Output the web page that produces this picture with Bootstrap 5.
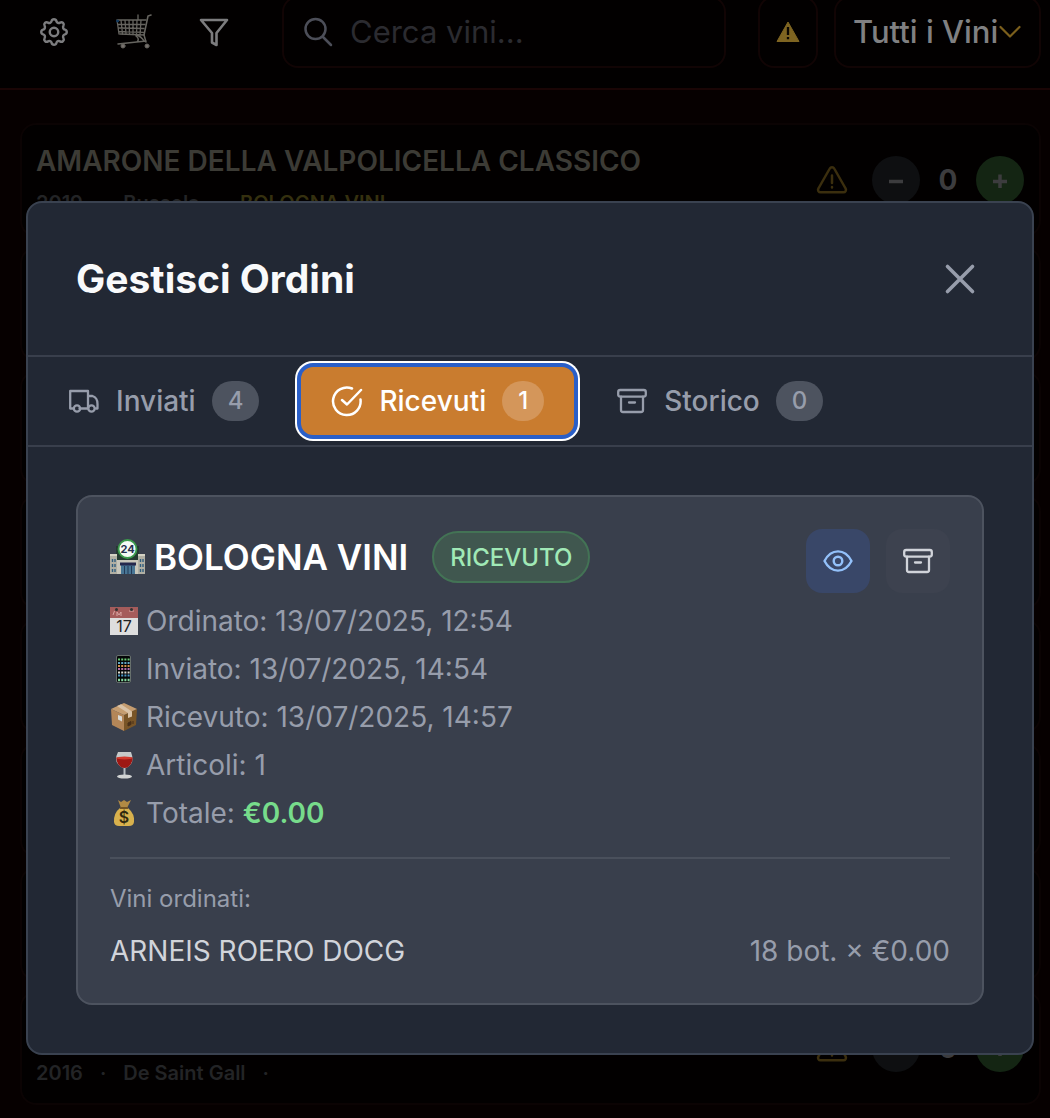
<!DOCTYPE html>
<html lang="it">
<head>
<meta charset="utf-8">
<meta name="viewport" content="width=device-width, initial-scale=1">
<title>Gestisci Ordini</title>
<link href="https://cdn.jsdelivr.net/npm/bootstrap@5.3.0/dist/css/bootstrap.min.css" rel="stylesheet">
<style>
  body { background: #060000; font-family: Inter, "Liberation Sans", sans-serif; color: #979dab; }
  svg { display: block; flex: none; }
  .stroke-icon { fill: none; stroke: currentColor; stroke-linecap: round; stroke-linejoin: round; }
  .app-shell { position: relative; height: 100vh; overflow: hidden; }

  .app-bar { margin-top: -4px; padding: 0 9px 20px 36px; background: #020000; border-bottom: 2px solid #1a0505; }
  .tool-set { gap: 44px; }
  .tool-btn { width: 36px; height: 72px; flex: none; color: #7c7c7e; }
  .field-box { height: 72px; border: 2px solid #110404; border-radius: 16px; background: #020000; }
  .search-box { padding: 0 18px; margin-left: 50px; min-width: 0; color: #4c4e58; }
  .search-box input { width: 0; min-width: 0; background: none; border: 0; outline: 0; color: inherit; font-size: 31px; }
  .search-box input::placeholder { color: #2b2b30; opacity: 1; }
  .alert-btn { width: 60px; flex: none; margin-left: 32px; }
  .filter-box { width: 207px; flex: none; margin-left: 16px; }
  .filter-box select { appearance: none; width: 100%; height: 100%; padding: 0 0 0 17px; border: 0; background: none; color: #808082; font-size: 31px; font-weight: 500; }
  .filter-box svg { position: absolute; right: 18px; top: 26px; pointer-events: none; }

  .wine-list { padding: 33px 9px 0 20px; }
  .wine-card { min-height: 114px; margin-bottom: 10px; padding: 0 15px 0 14px; border: 2px solid #0b0303; border-radius: 16px; background: #020000; }
  .wine-name { margin-bottom: 10px; font-size: 28px; line-height: 36px; color: #3c3b35; }
  .wine-meta { font-size: 20px; line-height: 28px; color: #232426; font-weight: 600; gap: 17px; }
  .wine-meta .supplier { color: #35300f; }
  .round-btn { width: 48px; height: 48px; border-radius: 50%; background: #0e0f11; color: #3c3c3e; }
  .round-btn.plus { background: #142513; }
  .qty { width: 56px; font-size: 28px; color: #3c3c3e; }

  .overlay { position: absolute; inset: 0; padding: 201px 16px 0 26px; }
  .orders { border: 2px solid #3a4250; border-radius: 16px; background: #222834; }
  .orders-head { padding: 48px 56px 48px 48px; border-bottom: 2px solid #393f4c; }
  .orders-head h1 { font-size: 39px; line-height: 56px; color: #f9fafb; }
  .plain-btn { color: #979dab; }
  .tab-bar { padding: 10px; gap: 12px; border-bottom: 2px solid #393f4c; }
  .tab-btn { height: 68px; padding: 0 30px; gap: 16px; border-radius: 12px; font-size: 28px; font-weight: 500; color: #979dab; }
  .tab-btn.current { background: #c97c2f; color: #fff; box-shadow: 0 0 0 4px #2a5fc8, 0 0 0 6px #fff; }
  .count { height: 40px; padding: 0 16px; border-radius: 20px; background: #4d535f; font-size: 24px; line-height: 40px; }
  .current .count { background: #d4965a; }
  .orders-body { padding: 48px; }
  .order { padding: 32px; border: 2px solid #4d535f; border-radius: 16px; background: #393f4c; }
  .order-title { height: 56px; margin-bottom: 12px; }
  .order-title h2 { margin-left: 8px; font-size: 35px; color: #fff; }
  .state { height: 52px; margin-left: 24px; padding: 0 16px; border: 2px solid #437355; border-radius: 26px; background: #40574f; color: #a0e9b6; font-size: 24px; line-height: 50px; font-weight: 500; }
  .sq-btn { width: 64px; height: 64px; border-radius: 16px; background: #3d424f; color: #d1d4da; }
  .sq-btn.view { background: #394768; color: #93c1fa; }
  .facts { font-size: 28px; line-height: 48px; }
  .facts li { gap: 8px; }
  .facts strong { color: #77dc8b; }
  .lines { margin-top: 20px; padding-top: 24px; border-top: 2px solid #4a505c; }
  .lines h3 { margin-bottom: 16px; font-size: 24px; line-height: 32px; font-weight: 400; color: #979dab; }
  .line-row { font-size: 28px; line-height: 40px; }
  .line-row .wine { color: #d1d4da; }
</style>
<script src="https://cdn.jsdelivr.net/npm/bootstrap@5.3.0/dist/js/bootstrap.bundle.min.js"></script>
</head>
<body>
<div class="app-shell">
  <header class="app-bar d-flex align-items-center">
    <div class="tool-set d-flex">
    <button class="tool-btn btn p-0 border-0 d-flex align-items-center justify-content-center" aria-label="Impostazioni">
      <svg class="stroke-icon" width="34" height="34" viewBox="0 0 24 24" stroke-width="1.7"><path d="M10.3 4.3c.4-1.75 2.95-1.75 3.4 0a1.72 1.72 0 0 0 2.57 1.07c1.54-.94 3.3.83 2.37 2.37a1.72 1.72 0 0 0 1.07 2.57c1.75.43 1.75 2.95 0 3.38a1.72 1.72 0 0 0-1.07 2.57c.94 1.54-.83 3.3-2.37 2.37a1.72 1.72 0 0 0-2.57 1.07c-.43 1.75-2.95 1.75-3.38 0a1.72 1.72 0 0 0-2.57-1.07c-1.54.94-3.3-.83-2.37-2.37a1.72 1.72 0 0 0-1.07-2.57c-1.75-.43-1.75-2.95 0-3.38a1.72 1.72 0 0 0 1.07-2.57c-.94-1.54.83-3.3 2.37-2.37 1 .6 2.3.07 2.57-1.07z"/><circle cx="12" cy="12" r="3"/></svg>
    </button>
    <button class="tool-btn btn p-0 border-0 d-flex align-items-center justify-content-center" aria-label="Ordini">
      <svg width="36" height="36" viewBox="0 0 36 36" fill="none" stroke="#66645f" stroke-linecap="round"><path d="M35 1l-3 1-4 19-24-1" stroke-width="1.6"/><path d="M1 6l29 0M2 10.500h27M3 14l25 .5M3 17.500l24.500.8M1 6l2 14M5 6l1.500 14M9 6l1 14M13 6l.5 14M17 6v14.500M21 6l-.5 14.500M25 6l-1 15M22 1v5" stroke-width="1.300"/><path d="M20 21q5 1 8 6M28 21l2 7M2 30l28-3M20 22q4 3 1 6" stroke-width="1.500"/><circle cx="7" cy="32" r="2" fill="#77716d"/><circle cx="31" cy="32" r="2" fill="#77716d"/><circle cx="1.500" cy="7" r="1" fill="#12395f" stroke="#12395f"/></svg>
    </button>
    <button class="tool-btn btn p-0 border-0 d-flex align-items-center justify-content-center" aria-label="Filtri">
      <svg class="stroke-icon" width="34" height="34" viewBox="0 0 34 34" stroke-width="2.600"><path d="M4 5h26L19.500 18v12L15 27.500V18z"/></svg>
    </button>
    </div>
    <label class="search-box field-box d-flex align-items-center flex-grow-1">
      <svg class="stroke-icon" width="32" height="32" viewBox="0 0 32 32" stroke-width="2.500"><circle cx="13.500" cy="13" r="10"/><path d="M21 21l8 8"/></svg>
      <input class="ms-3 p-0 flex-grow-1" type="search" placeholder="Cerca vini..." aria-label="Cerca vini">
    </label>
    <button class="alert-btn field-box btn p-0 d-flex align-items-center justify-content-center" aria-label="Avvisi">
      <svg width="26" height="24" viewBox="0 0 26 24"><path d="M13 2L24 21.500H2z" fill="#7e6421" stroke="#7e6421" stroke-linejoin="round"/><path d="M13 7v8M13 17v2.200" stroke="#0a0602" stroke-width="2.300"/></svg>
    </button>
    <div class="filter-box field-box position-relative">
      <select aria-label="Filtra vini"><option>Tutti i Vini</option></select>
      <svg class="stroke-icon" width="22" height="16" viewBox="0 0 22 16" stroke-width="2.200" color="#7c5f1c"><path d="M1.500 3l9.500 9.500L20.500 3"/></svg>
    </div>
  </header>

  <main class="wine-list">
    <article class="wine-card d-flex align-items-center">
      <div class="flex-grow-1">
        <h2 class="wine-name fw-semibold">AMARONE DELLA VALPOLICELLA CLASSICO</h2>
        <div class="wine-meta d-flex"><span>2019</span><span>·</span><span>Bussola</span><span>·</span><span class="supplier">BOLOGNA VINI</span></div>
      </div>
      <svg class="stroke-icon" width="32" height="30" viewBox="0 0 32 30" stroke-width="2.500" color="#3b2e0e"><path d="M13.800 3.500a2.500 2.500 0 0 1 4.400 0L29.600 23.500a2.500 2.500 0 0 1-2.200 3.800H4.600a2.500 2.500 0 0 1-2.200-3.800zM16 10.500v7.500M16 22v.4"/></svg>
      <button class="round-btn btn p-0 border-0 ms-4 d-flex align-items-center justify-content-center" aria-label="Diminuisci"><svg width="16" height="16"><path d="M1 9.500h14" stroke="currentColor" stroke-width="3.500"/></svg></button>
      <span class="qty fw-bold text-center">0</span>
      <button class="round-btn plus btn p-0 border-0 d-flex align-items-center justify-content-center" aria-label="Aumenta"><svg width="16" height="16"><path d="M1 9.500h14M8 2.500v14" stroke="currentColor" stroke-width="3.500"/></svg></button>
    </article>
    <article class="wine-card"></article>
    <article class="wine-card"></article>
    <article class="wine-card"></article>
    <article class="wine-card"></article>
    <article class="wine-card"></article>
    <article class="wine-card"></article>
    <article class="wine-card d-flex align-items-center">
      <div class="flex-grow-1 align-self-end pb-3">
        <div class="wine-meta d-flex"><span>2016</span><span>·</span><span>De Saint Gall</span><span>·</span></div>
      </div>
      <svg class="stroke-icon" width="32" height="30" viewBox="0 0 32 30" stroke-width="2.500" color="#3b2e0e"><path d="M13.800 3.500a2.500 2.500 0 0 1 4.400 0L29.600 23.500a2.500 2.500 0 0 1-2.200 3.800H4.600a2.500 2.500 0 0 1-2.200-3.800zM16 10.500v7.500M16 22v.4"/></svg>
      <button class="round-btn btn p-0 border-0 ms-4 d-flex align-items-center justify-content-center" aria-label="Diminuisci"><svg width="16" height="16"><path d="M1 9.500h14" stroke="currentColor" stroke-width="3.500"/></svg></button>
      <span class="qty fw-bold text-center">0</span>
      <button class="round-btn plus btn p-0 border-0 d-flex align-items-center justify-content-center" aria-label="Aumenta"><svg width="16" height="16"><path d="M1 9.500h14M8 2.500v14" stroke="currentColor" stroke-width="3.500"/></svg></button>
    </article>
  </main>

  <div class="overlay">
    <section class="orders" role="dialog" aria-labelledby="orders-title">
      <div class="orders-head d-flex align-items-center justify-content-between">
        <h1 id="orders-title" class="fw-bold mb-0">Gestisci Ordini</h1>
        <button class="plain-btn btn p-0 border-0" aria-label="Chiudi"><svg class="stroke-icon" width="32" height="32" viewBox="0 0 32 32" stroke-width="3.600"><path d="M3.500 3.500l25 25M28.500 3.500l-25 25"/></svg></button>
      </div>
      <nav class="tab-bar d-flex" aria-label="Stato ordini">
        <button class="tab-btn btn border-0 d-flex align-items-center">
          <svg class="stroke-icon" width="32" height="32" viewBox="0 0 32 32" stroke-width="2.300"><path d="M6 23.500H2.200V6H20v17.500h-8.500M20 11h4.500q5 1.500 5 8v4.500h-1.500"/><circle cx="9" cy="23.500" r="3.200"/><circle cx="23.500" cy="23.500" r="3.200"/></svg>
          Inviati <span class="count">4</span>
        </button>
        <button class="tab-btn current btn border-0 d-flex align-items-center">
          <svg class="stroke-icon" width="32" height="32" viewBox="0 0 32 32" stroke-width="2.500"><path d="M21 3.500A13.800 13.800 0 1 0 29.500 14.500M11 15l5 4.500L30 5"/></svg>
          Ricevuti <span class="count">1</span>
        </button>
        <button class="tab-btn btn border-0 d-flex align-items-center">
          <svg class="stroke-icon" width="32" height="32" viewBox="0 0 32 32" stroke-width="2.300"><rect x="2.200" y="5" width="27.600" height="6.600" rx="2"/><path d="M5 11.600V25q0 2 2 2h18q2 0 2-2V11.600M13 17.500h6"/></svg>
          Storico <span class="count">0</span>
        </button>
      </nav>
      <div class="orders-body">
        <article class="order">
          <div class="d-flex justify-content-between align-items-start">
            <div>
              <div class="order-title d-flex align-items-center">
                <svg width="36" height="36" viewBox="0 0 36 36"><path d="M6 7h23v14H6z" fill="#253b31"/><path d="M0 17h7v18H0zM28 17h7v18h-7z" fill="#b0afa3"/><path d="M0 16h7M28 16h7" stroke="#d4d2c4" stroke-width="2"/><path d="M7 21h21v14H7z" fill="#c8c7bb"/><path d="M11 24h14v11H11z" fill="#487594"/><path d="M10 25h16" stroke="#25284d" stroke-width="3"/><path d="M14.500 27v8M18 27v8M21.500 27v8" stroke="#233a57"/><path d="M2.500 20v13M5 20v13M30.500 20v13M33 20v13" stroke="#315e7f" stroke-width="1.400" stroke-dasharray="3 2"/><circle cx="17.500" cy="10" r="9" fill="#f5faf6" stroke="#3b9a4b" stroke-width="1.800"/><text x="17.500" y="14" text-anchor="middle" font-size="11" font-weight="700" fill="#26304d">24</text></svg>
                <h2 class="fw-semibold mb-0">BOLOGNA VINI</h2>
                <span class="state">RICEVUTO</span>
              </div>
              <ul class="facts list-unstyled mb-0">
                <li class="d-flex align-items-center">
                  <svg width="28" height="28" viewBox="0 0 28 28"><path d="M0 0h28v28H0z" fill="#dedede"/><path d="M0 0h28v11H0z" fill="#a55c5b"/><path d="M3 8l1.500-4M7 9V5l2 3 2-3v4M19 4h5" stroke="#d9a5a3" fill="none"/><circle cx="6.500" cy="2.500" r="1.500" fill="#333"/><circle cx="21.500" cy="2.500" r="1.500" fill="#333"/><text x="14" y="25" text-anchor="middle" font-size="16" fill="#222">17</text></svg>
                  Ordinato: 13/07/2025, 12:54
                </li>
                <li class="d-flex align-items-center">
                  <svg width="28" height="28" viewBox="0 0 28 28"><rect x="6.500" y=".5" width="14" height="27" rx="1.500" fill="#050607" stroke="#67706d"/><g stroke-width="1.900" stroke-dasharray="2 1.200"><path d="M8 4.500h12" stroke="#69cc74"/><path d="M8 8h12" stroke="#62a7c5"/><path d="M8 11h12" stroke="#d2924c"/><path d="M8 14h12" stroke="#b66caa"/><path d="M8 17.500h12" stroke="#dedcd1"/><path d="M8 20.500h12" stroke="#4e97c5"/><path d="M8 25h12" stroke="#85d7a0" stroke-width="2.500"/></g></svg>
                  Inviato: 13/07/2025, 14:54
                </li>
                <li class="d-flex align-items-center">
                  <svg width="28" height="28" viewBox="0 0 28 28"><path d="M1 6l13 6v16L2 22z" fill="#b38658"/><path d="M27 6l-13 6v16l12-6z" fill="#795527"/><path d="M1 6l13-6 13 6-13 6z" fill="#c59d70"/><path d="M7 3l4-1.700L22 8.500v5l-4 1.500v-5z" fill="#dac3a7"/><path d="M8 12l4 1.500v5L8 16.500z" fill="#d9dad7"/><path d="M18 20l3-1.500v3l-3 1.500zM23 18v3" fill="#493019" stroke="#493019"/></svg>
                  Ricevuto: 13/07/2025, 14:57
                </li>
                <li class="d-flex align-items-center">
                  <svg width="28" height="28" viewBox="0 0 28 28"><path d="M8 1h13q3 8 0 12-3 4-6.500 4T8 13Q4 9 8 1z" fill="#c7cac9"/><path d="M6.500 6.500h16q.5 4-2 7-2.500 3.500-6 3.500t-6-3.500Q6 10.500 6.500 6.500z" fill="#9e1814"/><ellipse cx="14.500" cy="7" rx="8" ry="1.500" fill="#d23a2d"/><path d="M14.500 17v8" stroke="#b7bdc3" stroke-width="2"/><ellipse cx="14.500" cy="25.500" rx="7.500" ry="2" fill="#d1d3d3"/></svg>
                  Articoli: 1
                </li>
                <li class="d-flex align-items-center">
                  <svg width="28" height="28" viewBox="0 0 28 28"><path d="M8 1l3 2 3-2 3 2 4-2-4 8h-6z" fill="#b18a44"/><path d="M10 9h8q7 6 6 14-.5 4-5 4H9q-4.500 0-5-4Q3.500 14 10 9z" fill="#d8b14d"/><path d="M10 9h8" stroke="#745525" stroke-width="2"/><text x="14" y="24" text-anchor="middle" font-size="16" font-weight="600" fill="#302910">$</text></svg>
                  <span>Totale: <strong class="fw-semibold">€0.00</strong></span>
                </li>
              </ul>
            </div>
            <div class="d-flex gap-3">
              <button class="sq-btn view btn p-0 border-0 d-flex align-items-center justify-content-center" aria-label="Vedi"><svg class="stroke-icon" width="32" height="32" viewBox="0 0 32 32" stroke-width="2.400"><path d="M2.500 16Q7.500 6.400 16 6.400T29.500 16Q24.500 25.600 16 25.600T2.500 16z"/><circle cx="16" cy="16" r="4.300"/></svg></button>
              <button class="sq-btn btn p-0 border-0 d-flex align-items-center justify-content-center" aria-label="Archivia"><svg class="stroke-icon" width="32" height="32" viewBox="0 0 32 32" stroke-width="2.300"><rect x="2.200" y="5" width="27.600" height="6.600" rx="2"/><path d="M5 11.600V25q0 2 2 2h18q2 0 2-2V11.600M13 17.500h6"/></svg></button>
            </div>
          </div>
          <div class="lines">
            <h3>Vini ordinati:</h3>
            <div class="line-row d-flex justify-content-between"><span class="wine">ARNEIS ROERO DOCG</span><span>18 bot. × €0.00</span></div>
          </div>
        </article>
      </div>
    </section>
  </div>
</div>
</body>
</html>
